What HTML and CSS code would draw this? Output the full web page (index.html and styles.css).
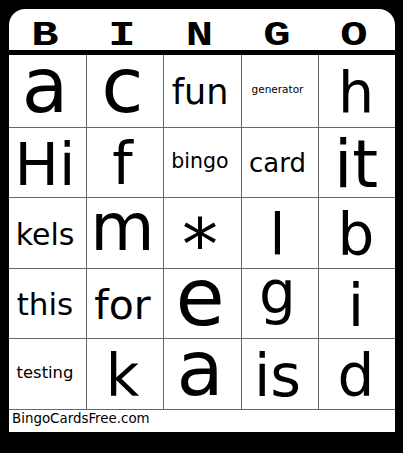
FILE: index.html
```html
<!DOCTYPE html>
<html>
<head>
<meta charset="utf-8">
<link rel="stylesheet" href="styles.css">
</head>
<body>
<div class="card">
  <div class="head">
    <span>B</span><span>I</span><span>N</span><span>G</span><span>O</span>
  </div>
  <div class="grid">
    <div class="cell"><span class="x s76">a</span></div>
    <div class="cell"><span class="x s77">c</span></div>
    <div class="cell"><span class="asc s35">fun</span></div>
    <div class="cell"><span class="desc s10">generator</span></div>
    <div class="cell"><span class="asc s57">h</span></div>

    <div class="cell"><span class="asc s59">Hi</span></div>
    <div class="cell"><span class="asc s58">f</span></div>
    <div class="cell"><span class="x s20">bingo</span></div>
    <div class="cell"><span class="asc s26">card</span></div>
    <div class="cell"><span class="asc s66">it</span></div>

    <div class="cell"><span class="asc s30">kels</span></div>
    <div class="cell"><span class="x s66">m</span></div>
    <div class="cell"><span class="star s72">*</span></div>
    <div class="cell"><span class="asc s57">l</span></div>
    <div class="cell"><span class="asc s58">b</span></div>

    <div class="cell"><span class="asc s31">this</span></div>
    <div class="cell"><span class="asc s41">for</span></div>
    <div class="cell"><span class="x s80">e</span></div>
    <div class="cell"><span class="desc s58">g</span></div>
    <div class="cell"><span class="asc s59">i</span></div>

    <div class="cell"><span class="x s16">testing</span></div>
    <div class="cell"><span class="asc s58">k</span></div>
    <div class="cell"><span class="x s77">a</span></div>
    <div class="cell"><span class="asc s59">is</span></div>
    <div class="cell"><span class="asc s58">d</span></div>
  </div>
  <div class="foot">BingoCardsFree.com</div>
</div>
</body>
</html>
```
FILE: styles.css
```css
html, body {
  margin: 0;
  padding: 0;
  background: #000;
}
body {
  width: 403px;
  height: 453px;
  overflow: hidden;
}
.card {
  margin: 9px 0 0 9px;
  width: 386px;
  background: #fff;
  border-radius: 16px 16px 0 0;
  font-family: "DejaVu Sans", sans-serif;
  color: #000;
}
.head {
  display: grid;
  grid-template-columns: 77px 77px 78px 77px 77px;
  height: 46px;
  box-sizing: border-box;
  padding-top: 13px;
  border-bottom: 5px solid #000;
  font-family: "Liberation Mono", "Courier New", monospace;
  font-weight: bold;
  font-size: 35px;
  line-height: 0.8;
  text-align: center;
}
.head span {
  display: block;
  padding-right: 4px;
  transform: scaleX(1.3);
}
.grid {
  display: grid;
  grid-template-columns: 77px 76px 77px 76px 76px;
  grid-template-rows: 72px 69px 70px 69px 70px;
  gap: 1px;
  background: #666;
  border-bottom: 1px solid #666;
}
.cell {
  background: #fff;
  display: flex;
  align-items: center;
  justify-content: center;
  padding-right: 5px;
}
.cell:nth-child(5n) {
  padding-right: 2px;
}
.cell span {
  white-space: nowrap;
  line-height: 0.7;
}
.x { padding-bottom: 0.14em; }
.asc { padding-top: 0.07em; }
.desc { padding-bottom: 0.34em; }
.star { padding-top: 0.3em; }

.s10 { font-size: 10.5px; }
.s16 { font-size: 16.4px; }
.s20 { font-size: 20.5px; }
.s26 { font-size: 26px; }
.s30 { font-size: 30px; }
.s31 { font-size: 31px; }
.s35 { font-size: 35px; }
.s41 { font-size: 41px; }
.s57 { font-size: 57px; }
.s58 { font-size: 58px; }
.s59 { font-size: 59px; }
.s66 { font-size: 66px; }
.s72 { font-size: 72px; }
.s76 { font-size: 76px; }
.s77 { font-size: 77px; }
.s80 { font-size: 80px; }

.foot {
  height: 22px;
  box-sizing: border-box;
  padding: 2px 0 0 3px;
  font-size: 13.4px;
  line-height: 1;
}
```
